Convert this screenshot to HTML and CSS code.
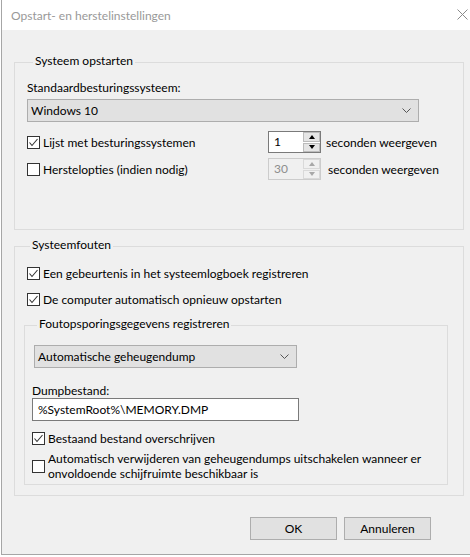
FILE: index.html
```html
<!DOCTYPE html>
<html lang="nl">
<head>
    <meta charset="UTF-8">
    <meta name="viewport" content="width=device-width, initial-scale=1.0">
    <title>Opstart- en herstelinstellingen</title>
    <link rel="stylesheet" href="styles.css">
</head>
<body>

    <div class="window">
        <div class="titlebar">
            <span class="title">Opstart- en herstelinstellingen</span>
            <svg class="close" width="11" height="11" viewBox="0 0 11 11">
                <path d="M0.5 0.5 L10.5 10.5 M10.5 0.5 L0.5 10.5" stroke="#8a8a8a" stroke-width="1" fill="none"/>
            </svg>
        </div>

        <div class="dialog">
            <div class="group group-startup">
                <div class="legend">Systeem opstarten</div>
                <div class="label label-os">Standaardbesturingssysteem:</div>
                <div class="combo combo-os">
                    <span>Windows 10</span>
                    <svg class="chevron" width="9" height="5" viewBox="0 0 9 5"><path d="M0.5 0.5 L4.5 4.5 L8.5 0.5" stroke="#555" fill="none"/></svg>
                </div>

                <div class="spin-row">
                    <div class="check">
                        <span class="box"><svg width="11" height="11" viewBox="0 0 11 11"><path d="M1.5 5.5 L4 8.5 L9.5 2" stroke="#333" stroke-width="1.1" fill="none"/></svg></span>
                        Lijst met besturingssystemen
                    </div>
                    <div class="spin">
                        <span class="spin-value">1</span>
                        <span class="spin-btns">
                            <span class="spin-btn"><i class="arrow-up"></i></span>
                            <span class="spin-btn"><i class="arrow-down"></i></span>
                        </span>
                    </div>
                    <span class="spin-label">seconden weergeven</span>
                </div>

                <div class="spin-row">
                    <div class="check">
                        <span class="box"></span>
                        Herstelopties (indien nodig)
                    </div>
                    <div class="spin disabled">
                        <span class="spin-value">30</span>
                        <span class="spin-btns">
                            <span class="spin-btn"><i class="arrow-up"></i></span>
                            <span class="spin-btn"><i class="arrow-down"></i></span>
                        </span>
                    </div>
                    <span class="spin-label">seconden weergeven</span>
                </div>
            </div>

            <div class="group group-errors">
                <div class="legend">Systeemfouten</div>
                <div class="check check-log">
                    <span class="box"><svg width="11" height="11" viewBox="0 0 11 11"><path d="M1.5 5.5 L4 8.5 L9.5 2" stroke="#333" stroke-width="1.1" fill="none"/></svg></span>
                    Een gebeurtenis in het systeemlogboek registreren
                </div>
                <div class="check check-restart">
                    <span class="box"><svg width="11" height="11" viewBox="0 0 11 11"><path d="M1.5 5.5 L4 8.5 L9.5 2" stroke="#333" stroke-width="1.1" fill="none"/></svg></span>
                    De computer automatisch opnieuw opstarten
                </div>

                <div class="group group-debug">
                    <div class="legend">Foutopsporingsgegevens registreren</div>
                    <div class="combo combo-dump">
                        <span>Automatische geheugendump</span>
                        <svg class="chevron" width="9" height="5" viewBox="0 0 9 5"><path d="M0.5 0.5 L4.5 4.5 L8.5 0.5" stroke="#555" fill="none"/></svg>
                    </div>
                    <div class="label label-dump">Dumpbestand:</div>
                    <div class="textbox">%SystemRoot%\MEMORY.DMP</div>
                    <div class="check check-overwrite">
                        <span class="box"><svg width="11" height="11" viewBox="0 0 11 11"><path d="M1.5 5.5 L4 8.5 L9.5 2" stroke="#333" stroke-width="1.1" fill="none"/></svg></span>
                        Bestaand bestand overschrijven
                    </div>
                    <div class="check check-wrap">
                        <span class="box"></span>
                        <span>Automatisch verwijderen van geheugendumps uitschakelen wanneer er onvoldoende schijfruimte beschikbaar is</span>
                    </div>
                </div>
            </div>

            <div class="buttons">
                <button class="btn">OK</button>
                <button class="btn">Annuleren</button>
            </div>
        </div>
    </div>

</body>
</html>
```

FILE: styles.css
```css
html, body {
    margin: 0;
    padding: 0;
    background: #fff;
    overflow: hidden;
}

body {
    font-family: Lato, "Noto Sans", sans-serif;
    font-size: 12px;
    line-height: 15px;
    color: #000;
}

.window {
    margin-left: 1px;
    width: 468px;
    border-left: 1px solid #a6a6a6;
    border-bottom: 1px solid #a6a6a6;
}

.titlebar {
    height: 30px;
    background: #fff;
    position: relative;
}

.title {
    position: absolute;
    left: 9px;
    top: 8px;
    color: #999;
}

.close {
    position: absolute;
    left: 455px;
    top: 9px;
}

.dialog {
    background: #f0f0f0;
    height: 524px;
    box-sizing: border-box;
    padding: 32px 0 0 12px;
}

/* group boxes */
.group {
    border: 1px solid #dcdcdc;
    box-sizing: border-box;
    width: 450px;
}

.legend {
    width: fit-content;
    background: #f0f0f0;
    margin: -10px 0 0 6px;
    padding: 0 2px;
}

.group-startup {
    height: 168px;
    padding: 0 12px;
}

.group-errors {
    height: 250px;
    margin-top: 16px;
    padding: 0 15px 0 9px;
}

.group-debug {
    width: auto;
    height: 160px;
    margin-top: 18px;
    padding: 0 7px;
}

.group-debug .legend {
    margin-left: 5px;
}

.label-os {
    margin-top: 12px;
}

/* combo boxes */
.combo {
    height: 23px;
    box-sizing: border-box;
    background: #e1e1e1;
    border: 1px solid #adadad;
    display: flex;
    align-items: center;
    justify-content: space-between;
    padding: 0 7px 0 3px;
}

.combo-os {
    margin-top: 4px;
    width: 392px;
}

.combo-dump {
    margin: 14px 0 0 2px;
    width: 263px;
}

/* checkboxes */
.check {
    display: flex;
    align-items: center;
    gap: 3px;
}

.box {
    width: 13px;
    height: 13px;
    box-sizing: border-box;
    border: 1px solid #333;
    background: #fff;
    flex: none;
    display: flex;
    align-items: center;
    justify-content: center;
}

.box svg {
    display: block;
}

.spin-row {
    display: grid;
    grid-template-columns: 241px 53px auto;
    align-items: center;
    height: 22px;
    margin-top: 5px;
}

.combo-os + .spin-row {
    margin-top: 9px;
}

.spin-label {
    padding-left: 5px;
}

/* spin boxes */
.spin {
    height: 22px;
    display: flex;
    box-sizing: border-box;
    border: 1px solid #7a7a7a;
    background: #fff;
}

.spin-value {
    flex: 1;
    padding-left: 5px;
    line-height: 20px;
}

.spin-btns {
    width: 17px;
    display: flex;
    flex-direction: column;
    gap: 1px;
    padding: 0 0 0 1px;
    background: #fff;
}

.spin-btn {
    flex: 1;
    background: #e5e5e5;
    border: 1px solid #bcbcbc;
    display: flex;
    align-items: center;
    justify-content: center;
}

.arrow-up, .arrow-down {
    width: 0;
    height: 0;
    border-left: 3.5px solid transparent;
    border-right: 3.5px solid transparent;
}

.arrow-up {
    border-bottom: 4px solid #000;
}

.arrow-down {
    border-top: 4px solid #000;
}

.spin.disabled {
    border-color: #cccccc;
    background: #f0f0f0;
    color: #8d8d8d;
}

.spin.disabled .spin-btns {
    background: #f0f0f0;
}

.spin.disabled .spin-btn {
    background: #f0f0f0;
    border-color: #d9d9d9;
}

.spin.disabled .arrow-up {
    border-bottom-color: #a8a8a8;
}

.spin.disabled .arrow-down {
    border-top-color: #a8a8a8;
}

.spin.disabled + .spin-label {
    padding-left: 7px;
}

/* system errors */
.check-log {
    height: 16px;
    margin: 13px 0 0 3px;
}

.check-restart {
    height: 16px;
    margin: 10px 0 0 3px;
}

.label-dump {
    margin-top: 15px;
}

.textbox {
    width: 267px;
    height: 23px;
    box-sizing: border-box;
    border: 1px solid #7a7a7a;
    background: #fff;
    padding-left: 5px;
    line-height: 21px;
}

.check-overwrite {
    height: 16px;
    margin-top: 9px;
}

.check-wrap {
    margin-top: 5px;
    padding-right: 10px;
}

/* buttons */
.buttons {
    display: flex;
    gap: 7px;
    margin: 21px 0 0 236px;
}

.btn {
    width: 87px;
    height: 23px;
    background: #e1e1e1;
    border: 1px solid #adadad;
    font-family: inherit;
    font-size: 12px;
    color: #000;
    padding: 0;
}
```
